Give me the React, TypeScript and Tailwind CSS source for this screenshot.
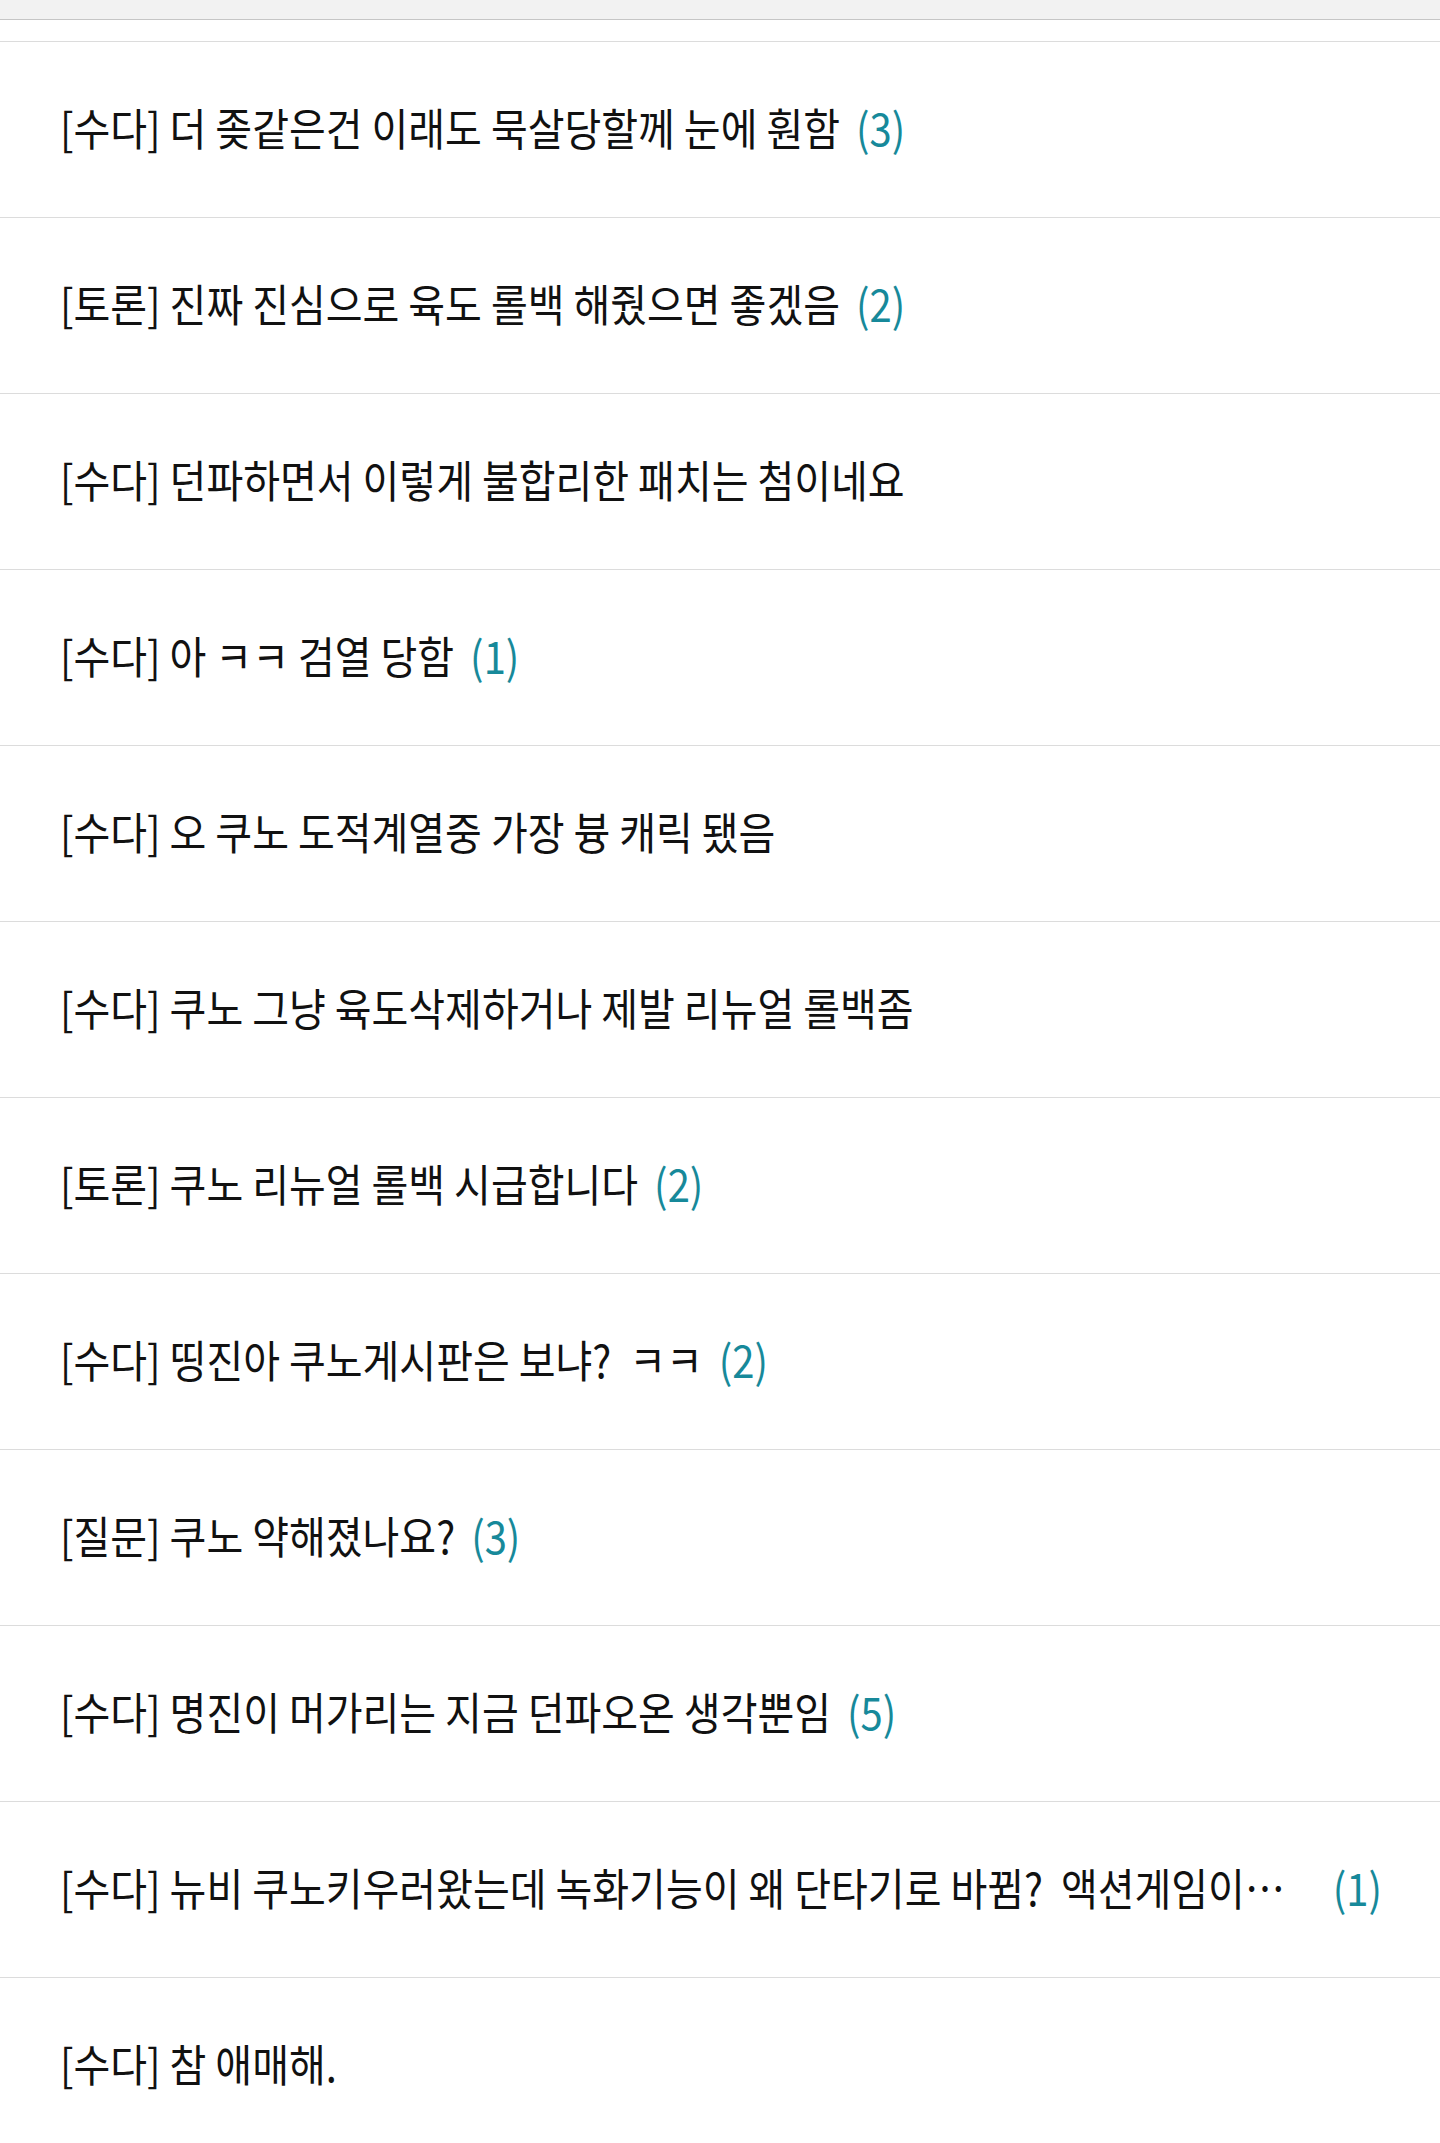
import React from 'react';

type Post = { title: string; comments?: number };

const posts: Post[] = [
  { title: '[수다] 더 좆같은건 이래도 묵살당할께 눈에 훤함', comments: 3 },
  { title: '[토론] 진짜 진심으로 육도 롤백 해줬으면 좋겠음', comments: 2 },
  { title: '[수다] 던파하면서 이렇게 불합리한 패치는 첨이네요' },
  { title: '[수다] 아 ㅋㅋ 검열 당함', comments: 1 },
  { title: '[수다] 오 쿠노 도적계열중 가장 븅 캐릭 됐음' },
  { title: '[수다] 쿠노 그냥 육도삭제하거나 제발 리뉴얼 롤백좀' },
  { title: '[토론] 쿠노 리뉴얼 롤백 시급합니다', comments: 2 },
  { title: '[수다] 띵진아 쿠노게시판은 보냐?  ㅋㅋ', comments: 2 },
  { title: '[질문] 쿠노 약해졌나요?', comments: 3 },
  { title: '[수다] 명진이 머가리는 지금 던파오온 생각뿐임', comments: 5 },
  { title: '[수다] 뉴비 쿠노키우러왔는데 녹화기능이 왜 단타기로 바뀜?  액션게임이라면서 이게 맞나요', comments: 1 },
  { title: '[수다] 참 애매해.' },
];

const PostRow: React.FC<{ post: Post }> = ({ post }) => (
  <li className="h-[176px] flex items-center pl-[60px] pr-[58px] pb-[6px] border-b border-[#dcdcdc]">
    <span className="min-w-0 truncate whitespace-pre text-[#111111] scale-y-[1.12]">{post.title}</span>
    {post.comments !== undefined && (
      <span className="shrink-0 ml-[16px] text-[#17899a] scale-y-[1.12]">({post.comments})</span>
    )}
  </li>
);

export default function App() {
  return (
    <div className="w-full min-h-screen bg-white text-[40px] leading-[1.4] font-['Noto_Sans_CJK_KR','Noto_Sans',sans-serif]">
      <div className="h-[20px] bg-[#f2f2f2] border-b border-[#c6c6c6]" />
      <div className="h-[22px] border-b border-[#dcdcdc]" />
      <ul>
        {posts.map((post, i) => (
          <PostRow key={i} post={post} />
        ))}
      </ul>
    </div>
  );
}
